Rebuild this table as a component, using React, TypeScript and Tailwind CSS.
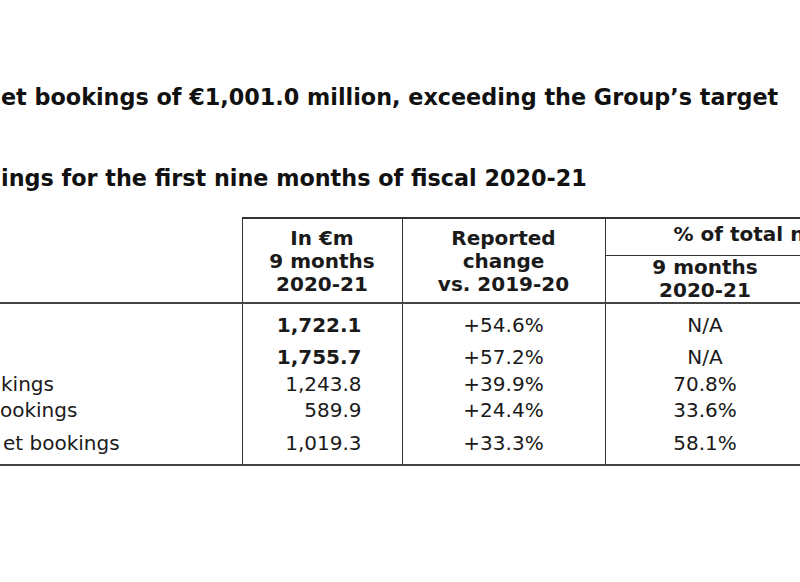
import React from 'react';

interface Row {
  label: string;
  value: string;
  change: string;
  share: string;
  bold?: boolean;
  pad: string;
  labelPad: string;
}

const rows: Row[] = [
  { label: '', value: '1,722.1', change: '+54.6%', share: 'N/A', bold: true, pad: 'pt-[10px]', labelPad: 'pl-0' },
  { label: '', value: '1,755.7', change: '+57.2%', share: 'N/A', bold: true, pad: 'pt-[9px]', labelPad: 'pl-0' },
  { label: 'kings', value: '1,243.8', change: '+39.9%', share: '70.8%', pad: 'pt-[4px]', labelPad: 'pl-[1px]' },
  { label: 'ookings', value: '589.9', change: '+24.4%', share: '33.6%', pad: 'pt-[3px]', labelPad: 'pl-0' },
  { label: 'et bookings', value: '1,019.3', change: '+33.3%', share: '58.1%', pad: 'pt-[10px] pb-[9px]', labelPad: 'pl-[3px]' },
];

export default function App() {
  return (
    <div className="w-[800px] h-[582px] overflow-hidden bg-white text-[#1a1a1a] font-['DejaVu_Sans',Verdana,sans-serif]">
      <div className="w-[1005px] pt-[84px]">
        <h1 className="text-[22.3px] leading-[26px] font-bold whitespace-nowrap text-[#111] pl-[1px]">
          et bookings of €1,001.0 million, exceeding the Group’s target
        </h1>
        <h2 className="mt-[55px] text-[22.3px] leading-[26px] font-bold whitespace-nowrap text-[#111] pl-[1px]">
          ings for the first nine months of fiscal 2020-21
        </h2>

        {/* Bookings table */}
        <table className="mt-[26px] w-[1005px] table-fixed border-collapse text-[20px] leading-[23px]">
          <colgroup>
            <col className="w-[242px]" />
            <col className="w-[160px]" />
            <col className="w-[203px]" />
            <col className="w-[200px]" />
            <col className="w-[200px]" />
          </colgroup>
          <thead>
            <tr className="font-bold">
              <th rowSpan={2} className="border-b-2 border-[#444]"></th>
              <th rowSpan={2} className="border-t-2 border-b-2 border-l border-[#333] border-b-[#444] pt-[8px] pb-[4px] text-center align-top font-bold">
                In €m<br />9 months<br />2020-21
              </th>
              <th rowSpan={2} className="border-t-2 border-b-2 border-l border-[#333] border-b-[#444] pt-[8px] pb-[4px] text-center align-top font-bold">
                Reported<br />change<br />vs. 2019-20
              </th>
              <th colSpan={2} className="border-t-2 border-b border-l border-[#333] pt-[4px] pb-[9px] text-center align-top font-bold whitespace-nowrap">
                % of total net bookings
              </th>
            </tr>
            <tr>
              <th className="border-b-2 border-l border-[#333] border-b-[#444] text-center align-top font-bold">
                9 months<br />2020-21
              </th>
              <th className="border-b-2 border-l border-[#333] border-b-[#444]"></th>
            </tr>
          </thead>
          <tbody>
            {rows.map((row, i) => (
              <tr key={i} className={i === rows.length - 1 ? 'border-b-2 border-[#444]' : ''}>
                <td className={`${row.pad} ${row.labelPad} whitespace-nowrap`}>{row.label}</td>
                <td className={`${row.pad} border-l border-[#333] pr-[40px] text-right ${row.bold ? 'font-bold' : ''}`}>
                  {row.value}
                </td>
                <td className={`${row.pad} border-l border-[#333] text-center`}>{row.change}</td>
                <td className={`${row.pad} border-l border-[#333] text-center`}>{row.share}</td>
                <td className={`${row.pad} border-l border-[#333]`}></td>
              </tr>
            ))}
          </tbody>
        </table>
      </div>
    </div>
  );
}
